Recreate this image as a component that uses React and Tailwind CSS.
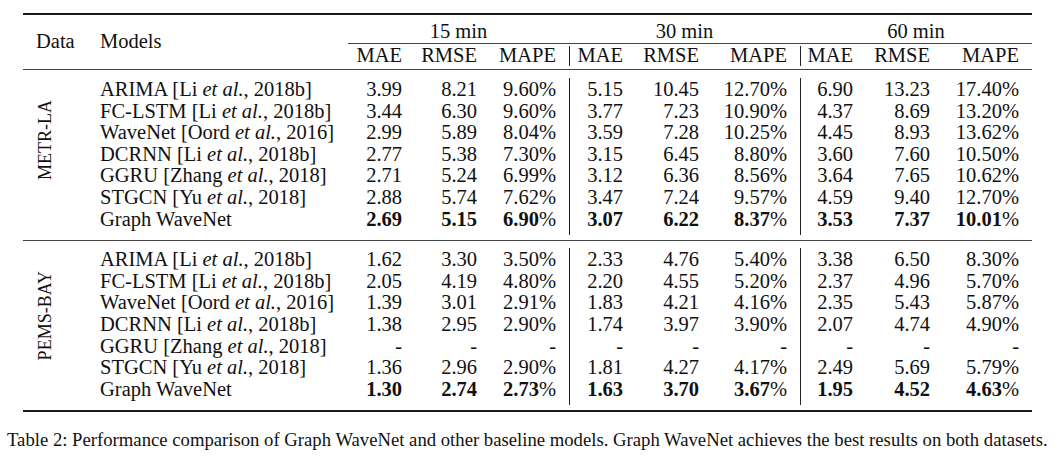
import React from "react";

const cite = (model, author, year) => (
  <>
    {model} [{author} <i>et al.</i>, {year}]
  </>
);

const metr = [
  { name: cite("ARIMA", "Li", "2018b"), v: ["3.99", "8.21", "9.60%", "5.15", "10.45", "12.70%", "6.90", "13.23", "17.40%"] },
  { name: cite("FC-LSTM", "Li", "2018b"), v: ["3.44", "6.30", "9.60%", "3.77", "7.23", "10.90%", "4.37", "8.69", "13.20%"] },
  { name: cite("WaveNet", "Oord", "2016"), v: ["2.99", "5.89", "8.04%", "3.59", "7.28", "10.25%", "4.45", "8.93", "13.62%"] },
  { name: cite("DCRNN", "Li", "2018b"), v: ["2.77", "5.38", "7.30%", "3.15", "6.45", "8.80%", "3.60", "7.60", "10.50%"] },
  { name: cite("GGRU", "Zhang", "2018"), v: ["2.71", "5.24", "6.99%", "3.12", "6.36", "8.56%", "3.64", "7.65", "10.62%"] },
  { name: cite("STGCN", "Yu", "2018"), v: ["2.88", "5.74", "7.62%", "3.47", "7.24", "9.57%", "4.59", "9.40", "12.70%"] },
  { name: "Graph WaveNet", bold: true, v: ["2.69", "5.15", "6.90%", "3.07", "6.22", "8.37%", "3.53", "7.37", "10.01%"] },
];

const pems = [
  { name: cite("ARIMA", "Li", "2018b"), v: ["1.62", "3.30", "3.50%", "2.33", "4.76", "5.40%", "3.38", "6.50", "8.30%"] },
  { name: cite("FC-LSTM", "Li", "2018b"), v: ["2.05", "4.19", "4.80%", "2.20", "4.55", "5.20%", "2.37", "4.96", "5.70%"] },
  { name: cite("WaveNet", "Oord", "2016"), v: ["1.39", "3.01", "2.91%", "1.83", "4.21", "4.16%", "2.35", "5.43", "5.87%"] },
  { name: cite("DCRNN", "Li", "2018b"), v: ["1.38", "2.95", "2.90%", "1.74", "3.97", "3.90%", "2.07", "4.74", "4.90%"] },
  { name: cite("GGRU", "Zhang", "2018"), v: ["-", "-", "-", "-", "-", "-", "-", "-", "-"] },
  { name: cite("STGCN", "Yu", "2018"), v: ["1.36", "2.96", "2.90%", "1.81", "4.27", "4.17%", "2.49", "5.69", "5.79%"] },
  { name: "Graph WaveNet", bold: true, v: ["1.30", "2.74", "2.73%", "1.63", "3.70", "3.67%", "1.95", "4.52", "4.63%"] },
];

const groups = ["15 min", "30 min", "60 min"];
const groupW = ["w-[221px]", "w-[231px]", "w-[232px]"];
const groupClasses = [
  "w-[221px]",
  "w-[231px] border-l border-[#222]",
  "w-[232px] border-l border-[#222]",
];
const colClasses = [
  ["w-[67px]", "w-[75px]", "w-[79px]"],
  ["w-[66px]", "w-[76px]", "w-[88px]"],
  ["w-[65px]", "w-[77px]", "w-[89px]"],
];
const subs = ["MAE", "RMSE", "MAPE"];

function Cell({ v, bold }) {
  if (!bold) return v;
  if (v.endsWith("%"))
    return (
      <>
        <b className="font-bold">{v.slice(0, -1)}</b>%
      </>
    );
  return <b className="font-bold">{v}</b>;
}

function Section({ label, labelPad, rows }) {
  return (
    <div className="flex">
      <div className={`w-[65px] shrink-0 flex items-center pl-[13px] ${labelPad}`}>
        <span className="[writing-mode:vertical-rl] rotate-180 text-[18px] leading-none whitespace-nowrap">
          {label}
        </span>
      </div>
      <div className="w-[260px] shrink-0 pl-[12px] pt-px pb-[5px]">
        {rows.map((r, i) => (
          <div key={i} className="h-[21.6px] leading-[21.6px] whitespace-nowrap">
            {r.name}
          </div>
        ))}
      </div>
      {groups.map((g, gi) => (
        <div key={g} className={`flex shrink-0 ${groupClasses[gi]}`}>
          {subs.map((s, ci) => (
            <div key={s} className={`${colClasses[gi][ci]} shrink-0 pr-[13px] pt-px pb-[5px] text-right`}>
              {rows.map((r, ri) => (
                <div key={ri} className="h-[21.6px] leading-[21.6px] whitespace-nowrap">
                  <Cell v={r.v[gi * 3 + ci]} bold={r.bold} />
                </div>
              ))}
            </div>
          ))}
        </div>
      ))}
    </div>
  );
}

export default function App() {
  return (
    <div className="w-[1061px] h-[463px] overflow-hidden bg-white text-[#111] font-['Liberation_Serif',serif]">
      <div className="ml-[23px] w-[1009px] pt-[13px] text-[20.5px]">
        <div className="h-[2px] bg-[#1a1a1a]" />
        <div className="flex">
          <div className="w-[65px] shrink-0 pl-[13px] flex items-center leading-[21.6px]">Data</div>
          <div className="w-[260px] shrink-0 pl-[12px] flex items-center leading-[21.6px]">Models</div>
          <div className="flex-1 pt-[5px] pb-[3px]">
            <div className="flex h-[22px]">
              {groups.map((g, gi) => (
                <div key={g} className={`${groupW[gi]} shrink-0 text-center leading-[22px]`}>
                  {g}
                </div>
              ))}
            </div>
            <div className="h-px bg-[#444] mt-px" />
            <div className="flex h-[22px] pt-[2px]">
              {groups.map((g, gi) => (
                <div key={g} className={`flex shrink-0 ${groupClasses[gi]}`}>
                  {subs.map((s, ci) => (
                    <div
                      key={s}
                      className={`${colClasses[gi][ci]} shrink-0 pr-[13px] text-right leading-[20px] -mt-[1px]`}
                    >
                      {s}
                    </div>
                  ))}
                </div>
              ))}
            </div>
          </div>
        </div>
        <div className="h-px bg-[#444]" />
        <div className="mt-[8px]">
          <Section label="METR-LA" labelPad="pb-[34px]" rows={metr} />
        </div>
        <div className="h-px bg-[#444] mt-[5px]" />
        <div className="mt-[7px]">
          <Section label="PEMS-BAY" labelPad="pb-[22px]" rows={pems} />
        </div>
        <div className="h-[2px] bg-[#1a1a1a] mt-[5px]" />
      </div>
      <p className="ml-[7px] mt-[18px] text-[18.7px] leading-[19.4px] whitespace-nowrap">
        Table 2: Performance comparison of Graph WaveNet and other baseline models. Graph WaveNet achieves the best
        results on both datasets.
      </p>
    </div>
  );
}
